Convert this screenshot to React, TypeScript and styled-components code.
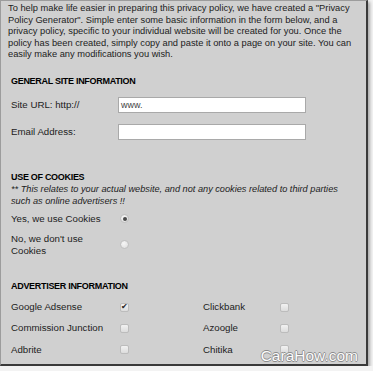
import React from "react";
import styled, { createGlobalStyle } from "styled-components";

const Global = createGlobalStyle`
  html, body { margin: 0; padding: 0; background: #f3f3f3; }
  body { font-family: "Liberation Sans", Arial, sans-serif; }
`;

const Frame = styled.div`
  position: relative;
  box-sizing: border-box;
  width: 368px;
  height: 366px;
  overflow: hidden;
  background: #d0d0d0;
  border-left: 1px solid #9c9c9c;
  border-top: 1px solid #9c9c9c;
  border-right: 2px solid #3a3a3a;
  border-bottom: 2px solid #3a3a3a;
  box-shadow: 2px 2px 3px rgba(0, 0, 0, 0.3);
  color: #1c1c1c;
  font-size: 9.7px;
`;

const Intro = styled.p`
  margin: 0;
  padding: 2px 0 0 7px;
  font-size: 9.3px;
  line-height: 11.5px;
  white-space: nowrap;
`;

const Section = styled.div<{ $top: number }>`
  padding-left: 10px;
  margin-top: ${(p) => p.$top}px;
`;

const Heading = styled.div`
  font-size: 9px;
  font-weight: bold;
  color: #000;
  line-height: 12px;
  letter-spacing: -0.3px;
`;

const FieldGrid = styled.div`
  display: grid;
  grid-template-columns: 107px 188px;
  grid-auto-rows: 16px;
  row-gap: 11px;
  align-items: center;
  margin-top: 10px;
`;

const Label = styled.span`
  line-height: 12px;
`;

const TextInput = styled.div`
  box-sizing: border-box;
  height: 16px;
  background: #fff;
  border: 1px solid #a9a9a9;
  padding-left: 2px;
  line-height: 14px;
  font-size: 9px;
  color: #444;
`;

const Note = styled.div`
  font-style: italic;
  font-size: 9.2px;
  line-height: 12px;
  white-space: nowrap;
`;

const ChoiceGrid = styled.div`
  display: grid;
  grid-template-columns: 92px 9px;
  column-gap: 17px;
  row-gap: 8px;
  align-items: center;
  margin-top: 6px;
`;

const Radio = styled.span<{ $on?: boolean }>`
  box-sizing: border-box;
  display: flex;
  align-items: center;
  justify-content: center;
  width: 9px;
  height: 9px;
  border-radius: 50%;
  border: 1px solid #c0c0c0;
  background: radial-gradient(circle at 40% 35%, #f6f6f6, #dcdcdc);
  &::after {
    content: "";
    display: ${(p) => (p.$on ? "block" : "none")};
    width: 4px;
    height: 4px;
    border-radius: 50%;
    background: #4a4a4a;
  }
`;

const AdGrid = styled.div`
  display: grid;
  grid-template-columns: 109px 83px 77px 9px;
  grid-auto-rows: 21.33px;
  align-items: center;
  margin-top: 5px;
`;

const Box = styled.span`
  box-sizing: border-box;
  display: flex;
  align-items: center;
  justify-content: center;
  width: 9px;
  height: 9px;
  border-radius: 2px;
  border: 1px solid #bcbcbc;
  background: linear-gradient(#f2f2f2, #dcdcdc);
  font-size: 8px;
  line-height: 1;
  color: #222;
`;

const Watermark = styled.div`
  position: absolute;
  right: 8px;
  bottom: 0;
  font-family: "Liberation Sans", Arial, sans-serif;
  font-size: 15.5px;
  line-height: 17px;
  color: #fbfbfb;
  text-shadow: 0.7px 0 0 #8c8c8c, -0.7px 0 0 #8c8c8c, 0 0.7px 0 #8c8c8c, 0 -0.7px 0 #8c8c8c;
`;

const ads: [string, boolean, string, boolean][] = [
  ["Google Adsense", true, "Clickbank", false],
  ["Commission Junction", false, "Azoogle", false],
  ["Adbrite", false, "Chitika", false],
  ["", false, "", false],
];

export default function App() {
  return (
    <>
      <Global />
      <Frame>
        <Intro>
          To help make life easier in preparing this privacy policy, we have created a "Privacy
          <br />
          Policy Generator". Simple enter some basic information in the form below, and a
          <br />
          privacy policy, specific to your individual website will be created for you. Once the
          <br />
          policy has been created, simply copy and paste it onto a page on your site. You can
          <br />
          easily make any modifications you wish.
        </Intro>

        <Section $top={14.5}>
          <Heading>GENERAL SITE INFORMATION</Heading>
          <FieldGrid>
            <Label>Site URL: http://</Label>
            <TextInput>www.</TextInput>
            <Label>Email Address:</Label>
            <TextInput />
          </FieldGrid>
        </Section>

        <Section $top={30.5}>
          <Heading>USE OF COOKIES</Heading>
          <Note>
            ** This relates to your actual website, and not any cookies related to third parties
            <br />
            such as online advertisers !!
          </Note>
          <ChoiceGrid>
            <Label>Yes, we use Cookies</Label>
            <Radio $on />
            <Label>No, we don't use Cookies</Label>
            <Radio />
          </ChoiceGrid>
        </Section>

        <Section $top={23}>
          <Heading>ADVERTISER INFORMATION</Heading>
          <AdGrid>
            {ads.map(([a, aOn, b, bOn], i) => (
              <React.Fragment key={i}>
                <Label>{a}</Label>
                <Box>{aOn ? "✔" : ""}</Box>
                <Label>{b}</Label>
                <Box>{bOn ? "✔" : ""}</Box>
              </React.Fragment>
            ))}
          </AdGrid>
        </Section>

        <Watermark>CaraHow.com</Watermark>
      </Frame>
    </>
  );
}
